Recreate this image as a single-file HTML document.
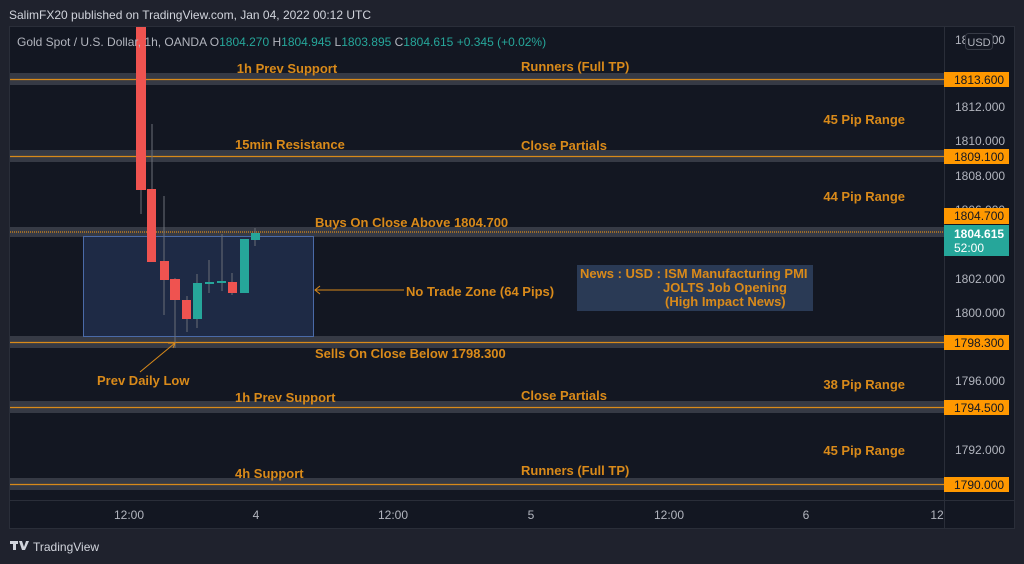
<!DOCTYPE html>
<html><head><meta charset="utf-8"><style>
body{margin:0;width:1024px;height:564px;background:#1f222d;overflow:hidden;font-family:"Liberation Sans",sans-serif}
svg{display:block}
</style></head><body>
<svg width="1024" height="564" viewBox="0 0 1024 564" xmlns="http://www.w3.org/2000/svg" font-family="Liberation Sans, sans-serif">
<rect width="1024" height="564" fill="#1f222d"/>
<text x="9" y="19" fill="#d1d4dc" font-size="12">SalimFX20 published on TradingView.com, Jan 04, 2022 00:12 UTC</text>
<rect x="9.5" y="26.5" width="1005" height="502" fill="#131722" stroke="#2a2e39"/>
<line x1="944.5" y1="27" x2="944.5" y2="528" stroke="#2a2e39"/>
<line x1="10" y1="500.5" x2="1014" y2="500.5" stroke="#2a2e39"/>
<!-- levels -->
<g>
<rect x="10" y="73" width="934" height="12" fill="#363a45"/><line x1="10" y1="79.5" x2="944" y2="79.5" stroke="#d98a1a" stroke-width="1.3"/>
<rect x="10" y="150" width="934" height="12" fill="#363a45"/><line x1="10" y1="156.5" x2="944" y2="156.5" stroke="#d98a1a" stroke-width="1.3"/>
<rect x="10" y="227" width="934" height="10" fill="#363a45"/><line x1="10" y1="232" x2="944" y2="232" stroke="#d98a1a" stroke-width="1.3" stroke-dasharray="1 1"/>
<rect x="10" y="336" width="934" height="12" fill="#363a45"/><line x1="10" y1="342.5" x2="944" y2="342.5" stroke="#d98a1a" stroke-width="1.3"/>
<rect x="10" y="401" width="934" height="12" fill="#363a45"/><line x1="10" y1="407.5" x2="944" y2="407.5" stroke="#d98a1a" stroke-width="1.3"/>
<rect x="10" y="478" width="934" height="12" fill="#363a45"/><line x1="10" y1="484.5" x2="944" y2="484.5" stroke="#d98a1a" stroke-width="1.3"/>
</g>
<!-- box -->
<rect x="83.5" y="236.5" width="230" height="100" fill="#1e2a45" stroke="#4a6aa8"/>
<!-- candles -->
<g stroke="#6b6f78" stroke-width="1">
<line x1="141" y1="190" x2="141" y2="214"/><line x1="152" y1="124" x2="152" y2="262"/>
<line x1="164" y1="196" x2="164" y2="315"/><line x1="175" y1="278" x2="175" y2="348"/>
<line x1="187" y1="296" x2="187" y2="332"/><line x1="197" y1="274" x2="197" y2="328"/>
<line x1="209" y1="260" x2="209" y2="293"/><line x1="222" y1="234" x2="222" y2="291"/>
<line x1="232" y1="273" x2="232" y2="295"/><line x1="255" y1="228" x2="255" y2="246"/>
</g>
<g fill="#ef5350">
<rect x="136" y="27" width="10" height="163"/><rect x="147" y="189" width="9" height="73"/>
<rect x="160" y="261" width="9" height="19"/><rect x="170" y="279" width="10" height="21"/>
<rect x="182" y="300" width="9" height="19"/><rect x="228" y="282" width="9" height="11"/>
</g>
<g fill="#26a69a">
<rect x="193" y="283" width="9" height="36"/><rect x="205" y="282" width="9" height="2"/>
<rect x="217" y="281" width="9" height="2"/><rect x="240" y="239" width="9" height="54"/>
<rect x="251" y="233" width="9" height="7"/>
</g>
<text x="17" y="46" fill="#b2b5be" font-size="12">Gold Spot / U.S. Dollar, 1h, OANDA <tspan fill="#b2b5be">O</tspan><tspan fill="#26a69a">1804.270</tspan> H<tspan fill="#26a69a">1804.945</tspan> L<tspan fill="#26a69a">1803.895</tspan> C<tspan fill="#26a69a">1804.615</tspan> <tspan fill="#26a69a">+0.345 (+0.02%)</tspan></text>
<!-- arrows -->
<g stroke="#d98a1a" fill="none" stroke-width="1">
<line x1="315" y1="290" x2="404" y2="290"/><polyline points="320,286 315,290 320,294"/>
<line x1="140" y1="372" x2="175" y2="343"/><polyline points="168,343 175,343 173,348"/>
</g>
<!-- news -->
<rect x="577" y="265" width="236" height="46" fill="#2a3a55"/>
<g fill="#d98a1a" font-size="13" font-weight="bold">
<text x="287" y="73" text-anchor="middle">1h Prev Support</text>
<text x="521" y="71">Runners (Full TP)</text>
<text x="905" y="124" text-anchor="end">45 Pip Range</text>
<text x="235" y="149">15min Resistance</text>
<text x="521" y="150">Close Partials</text>
<text x="905" y="201" text-anchor="end">44 Pip Range</text>
<text x="315" y="227">Buys On Close Above 1804.700</text>
<text x="406" y="296">No Trade Zone (64 Pips)</text>
<text x="315" y="358">Sells On Close Below 1798.300</text>
<text x="97" y="385">Prev Daily Low</text>
<text x="235" y="402">1h Prev Support</text>
<text x="521" y="400">Close Partials</text>
<text x="905" y="389" text-anchor="end">38 Pip Range</text>
<text x="905" y="455" text-anchor="end">45 Pip Range</text>
<text x="235" y="478">4h Support</text>
<text x="521" y="475">Runners (Full TP)</text>
<text x="580" y="278">News : USD : ISM Manufacturing PMI</text>
<text x="663" y="292">JOLTS Job Opening</text>
<text x="665" y="306">(High Impact News)</text>
</g>
<!-- price axis -->
<g fill="#b2b5be" font-size="12">
<text x="955" y="44">1814.000</text>
<text x="955" y="111">1812.000</text>
<text x="955" y="145">1810.000</text>
<text x="955" y="180">1808.000</text>
<text x="955" y="214">1806.000</text>
<text x="955" y="283">1802.000</text>
<text x="955" y="317">1800.000</text>
<text x="955" y="385">1796.000</text>
<text x="955" y="454">1792.000</text>
</g>
<rect x="965.5" y="33.5" width="27" height="16" rx="3" fill="#131722" stroke="#363a45"/>
<text x="979" y="46" fill="#b2b5be" font-size="11" text-anchor="middle">USD</text>
<g font-size="12" fill="#131722">
<rect x="944" y="72" width="65" height="15" fill="#ff9800"/><text x="954" y="84">1813.600</text>
<rect x="944" y="149" width="65" height="15" fill="#ff9800"/><text x="954" y="161">1809.100</text>
<rect x="944" y="208" width="65" height="16" fill="#ff9800"/><text x="954" y="220">1804.700</text>
<rect x="944" y="335" width="65" height="15" fill="#ff9800"/><text x="954" y="347">1798.300</text>
<rect x="944" y="400" width="65" height="15" fill="#ff9800"/><text x="954" y="412">1794.500</text>
<rect x="944" y="477" width="65" height="15" fill="#ff9800"/><text x="954" y="489">1790.000</text>
</g>
<rect x="944" y="225" width="65" height="31" fill="#26a69a"/>
<text x="954" y="238" fill="#fff" font-size="12" font-weight="bold">1804.615</text>
<text x="954" y="252" fill="#fff" font-size="12">52:00</text>
<!-- time axis -->
<g fill="#b2b5be" font-size="12" text-anchor="middle">
<text x="129" y="519">12:00</text><text x="256" y="519">4</text><text x="393" y="519">12:00</text>
<text x="531" y="519">5</text><text x="669" y="519">12:00</text><text x="806" y="519">6</text><text x="937" y="519">12</text>
</g>
<!-- logo -->
<g fill="#d1d4dc"><rect x="10" y="541" width="8" height="3"/><rect x="13" y="541" width="3" height="9"/><polygon points="19,541 22,541 24,547 26,541 29,541 25,550 22,550"/></g>
<text x="33" y="551" fill="#d1d4dc" font-size="12">TradingView</text>
</svg>
</body></html>
